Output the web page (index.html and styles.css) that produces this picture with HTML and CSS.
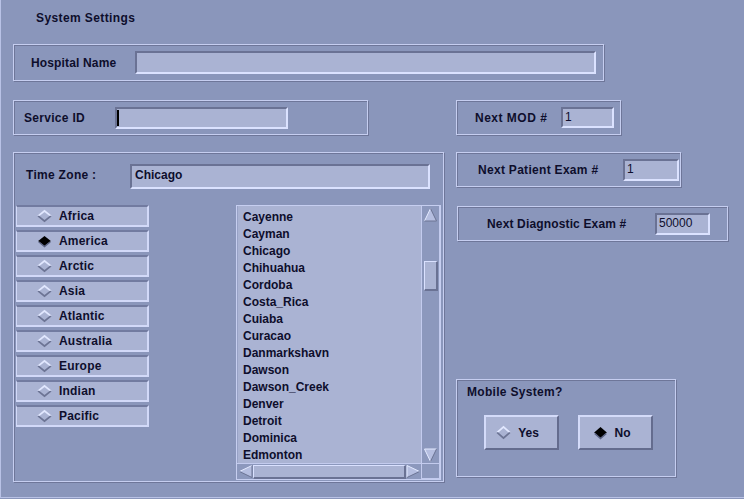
FILE: index.html
```html
<!DOCTYPE html>
<html>
<head>
<meta charset="utf-8">
<title>System Settings</title>
<link rel="stylesheet" href="styles.css">
</head>
<body>
<div class="window">
  <div class="title">System Settings</div>

  <div class="frame hospital">
    <span class="label lbl-hosp">Hospital Name</span>
    <div class="field f-hosp"></div>
  </div>

  <div class="main">
    <div class="col-left">
      <div class="frame service">
        <span class="label lbl-svc">Service ID</span>
        <div class="field f-svc"><span class="cursor"></span></div>
      </div>

      <div class="frame tz">
        <div class="tz-head">
          <span class="label lbl-tz">Time Zone :</span>
          <div class="field f-tz">Chicago</div>
        </div>
        <div class="tz-body">
          <div class="regions">
            <div class="radio"><svg class="dia" viewBox="0 0 13 13" preserveAspectRatio="none"><path class="hi" d="M1,6.5 L6.5,1 L12,6.5"/><path class="lo" d="M1,6.5 L6.5,12 L12,6.5"/></svg><span>Africa</span></div>
            <div class="radio"><svg class="dia" viewBox="0 0 13 13" preserveAspectRatio="none"><polygon class="on" points="6.5,1 12,6.5 6.5,12 1,6.5"/><path class="onlo" d="M1.5,7.5 L6.5,12.5 L11.5,7.5"/></svg><span>America</span></div>
            <div class="radio"><svg class="dia" viewBox="0 0 13 13" preserveAspectRatio="none"><path class="hi" d="M1,6.5 L6.5,1 L12,6.5"/><path class="lo" d="M1,6.5 L6.5,12 L12,6.5"/></svg><span>Arctic</span></div>
            <div class="radio"><svg class="dia" viewBox="0 0 13 13" preserveAspectRatio="none"><path class="hi" d="M1,6.5 L6.5,1 L12,6.5"/><path class="lo" d="M1,6.5 L6.5,12 L12,6.5"/></svg><span>Asia</span></div>
            <div class="radio"><svg class="dia" viewBox="0 0 13 13" preserveAspectRatio="none"><path class="hi" d="M1,6.5 L6.5,1 L12,6.5"/><path class="lo" d="M1,6.5 L6.5,12 L12,6.5"/></svg><span>Atlantic</span></div>
            <div class="radio"><svg class="dia" viewBox="0 0 13 13" preserveAspectRatio="none"><path class="hi" d="M1,6.5 L6.5,1 L12,6.5"/><path class="lo" d="M1,6.5 L6.5,12 L12,6.5"/></svg><span>Australia</span></div>
            <div class="radio"><svg class="dia" viewBox="0 0 13 13" preserveAspectRatio="none"><path class="hi" d="M1,6.5 L6.5,1 L12,6.5"/><path class="lo" d="M1,6.5 L6.5,12 L12,6.5"/></svg><span>Europe</span></div>
            <div class="radio"><svg class="dia" viewBox="0 0 13 13" preserveAspectRatio="none"><path class="hi" d="M1,6.5 L6.5,1 L12,6.5"/><path class="lo" d="M1,6.5 L6.5,12 L12,6.5"/></svg><span>Indian</span></div>
            <div class="radio"><svg class="dia" viewBox="0 0 13 13" preserveAspectRatio="none"><path class="hi" d="M1,6.5 L6.5,1 L12,6.5"/><path class="lo" d="M1,6.5 L6.5,12 L12,6.5"/></svg><span>Pacific</span></div>
          </div>

          <div class="list">
            <div class="items">
              <div>Cayenne</div>
              <div>Cayman</div>
              <div>Chicago</div>
              <div>Chihuahua</div>
              <div>Cordoba</div>
              <div>Costa_Rica</div>
              <div>Cuiaba</div>
              <div>Curacao</div>
              <div>Danmarkshavn</div>
              <div>Dawson</div>
              <div>Dawson_Creek</div>
              <div>Denver</div>
              <div>Detroit</div>
              <div>Dominica</div>
              <div>Edmonton</div>
            </div>
            <div class="vscroll">
              <svg class="arrow-v" viewBox="0 0 13 14"><polygon class="af" points="6.5,0.5 12.5,13 0.5,13"/><path class="al" d="M0.5,13 L6.5,0.5"/><path class="ad" d="M6.5,0.5 L12.5,13 L0.5,13"/></svg>
              <div class="vthumb"></div>
              <svg class="arrow-v down" viewBox="0 0 13 14"><polygon class="af" points="0.5,1 12.5,1 6.5,13.5"/><path class="al" d="M6.5,13.5 L0.5,1 L12.5,1"/><path class="ad" d="M12.5,1 L6.5,13.5"/></svg>
            </div>
            <div class="hscroll">
              <svg class="arrow-h" viewBox="0 0 14 13"><polygon class="af" points="0.5,6.5 13,0.5 13,12.5"/><path class="al" d="M13,0.5 L0.5,6.5"/><path class="ad" d="M0.5,6.5 L13,12.5 L13,0.5"/></svg>
              <div class="hthumb"></div>
              <svg class="arrow-h" viewBox="0 0 14 13"><polygon class="af" points="1,0.5 13.5,6.5 1,12.5"/><path class="al" d="M1,12.5 L1,0.5 L13.5,6.5"/><path class="ad" d="M13.5,6.5 L1,12.5"/></svg>
            </div>
            <div class="corner"></div>
          </div>
        </div>
      </div>
    </div>

    <div class="col-right">
      <div class="frame mod">
        <span class="label lbl-mod">Next MOD #</span>
        <div class="field num f-mod">1</div>
      </div>
      <div class="frame patient">
        <span class="label lbl-pat">Next Patient Exam #</span>
        <div class="field num f-pat">1</div>
      </div>
      <div class="frame diag">
        <span class="label lbl-diag">Next Diagnostic Exam #</span>
        <div class="field num f-diag">50000</div>
      </div>
      <div class="frame mobile">
        <div class="label lbl-mob">Mobile System?</div>
        <div class="buttons">
          <div class="btn"><svg class="dia big" viewBox="0 0 13 13" preserveAspectRatio="none"><path class="hi" d="M1,6.5 L6.5,1 L12,6.5"/><path class="lo" d="M1,6.5 L6.5,12 L12,6.5"/></svg><span>Yes</span></div>
          <div class="btn"><svg class="dia big" viewBox="0 0 13 13" preserveAspectRatio="none"><polygon class="on" points="6.5,1 12,6.5 6.5,12 1,6.5"/><path class="onlo" d="M1.5,7.5 L6.5,12.5 L11.5,7.5"/></svg><span>No</span></div>
        </div>
      </div>
    </div>
  </div>
</div>
</body>
</html>
```

FILE: styles.css
```css
* { box-sizing: border-box; }

html, body {
  margin: 0;
  padding: 0;
  background: #8a96bb;
}

body {
  font-family: "Liberation Sans", Arial, sans-serif;
  font-size: 12px;
  font-weight: bold;
  color: #0e0e2c;
}

.window {
  width: 744px;
  height: 498px;
  border-left: 1px solid #b9c2e6;
  border-bottom: 1px solid #b9c2e6;
  background: #8a96bb;
  overflow: hidden;
}

.title {
  margin: 11px 0 0 35px;
  line-height: 14px;
  height: 14px;
  letter-spacing: 0.4px;
}

.frame {
  border: 1px solid #c6cef0;
  box-shadow: inset 1px 1px 0 #6e7699, 1px 1px 0 #6e7699;
}

.label {
  flex: none;
  line-height: 14px;
  white-space: nowrap;
  letter-spacing: 0.3px;
}

.field {
  flex: none;
  background: #aab3d3;
  border-style: solid;
  border-width: 2px;
  border-color: #6a7294 #dbe2ff #dbe2ff #6a7294;
}

.field.num {
  font-weight: normal;
  line-height: 17px;
  padding-left: 2px;
}

/* Hospital */
.hospital {
  display: flex;
  align-items: center;
  margin: 19px 0 0 12px;
  width: 591px;
  height: 37px;
  padding-left: 17px;
}
.lbl-hosp { width: 104px; letter-spacing: 0.15px; }
.f-hosp { width: 461px; height: 23px; }

/* main area */
.main {
  display: flex;
  margin-top: 19px;
}

.col-left {
  margin-left: 12px;
  width: 431px;
  display: flex;
  flex-direction: column;
}

.service {
  display: flex;
  align-items: center;
  width: 355px;
  height: 35px;
  padding-left: 10px;
}
.lbl-svc { width: 91px; }
.f-svc {
  width: 173px;
  height: 22px;
  display: flex;
  align-items: center;
  padding-left: 0;
}
.cursor {
  display: block;
  width: 2px;
  height: 16px;
  background: #000;
}

.tz {
  margin-top: 17px;
  width: 431px;
  height: 330px;
  padding: 11px 2px 0 2px;
  display: flex;
  flex-direction: column;
}

.tz-head {
  display: flex;
  align-items: center;
  padding-left: 10px;
}
.lbl-tz { width: 104px; margin-top: -3px; }
.f-tz {
  width: 300px;
  height: 25px;
  padding: 1px 0 0 3px;
  line-height: 16px;
}

.tz-body {
  margin-top: 16px;
  display: flex;
  justify-content: space-between;
  align-items: flex-start;
}

.regions {
  width: 133px;
  display: flex;
  flex-direction: column;
  gap: 3px;
}

.radio {
  height: 22px;
  background: #aab3d3;
  border-style: solid;
  border-width: 2px 2px 2px 1px;
  border-color: #727ba0 #d2d9f8 #d2d9f8 #d2d9f8;
  display: flex;
  align-items: center;
  padding-left: 20px;
  gap: 7px;
  line-height: 14px;
  letter-spacing: 0.2px;
}

.dia {
  width: 15px;
  height: 12px;
  flex: none;
  overflow: visible;
}
.dia.big { width: 15px; height: 13px; }
.dia .hi { fill: none; stroke: #e2e8ff; stroke-width: 1.7; }
.dia .lo { fill: none; stroke: #6c7494; stroke-width: 1.7; }
.dia .on { fill: #000; }
.dia .onlo { fill: none; stroke: #5a6282; stroke-width: 1.3; }

/* list */
.list {
  width: 205px;
  height: 275px;
  border: 1px solid #c6cef0;
  display: grid;
  grid-template-columns: 1fr 19px;
  grid-template-rows: 1fr 16px;
}

.items {
  background: #aab3d3;
  padding: 3px 0 0 5px;
  line-height: 17px;
  overflow: hidden;
  border-left: 1px solid #98a2c6;
}

.vscroll {
  background: #8c98bd;
  border-left: 1px solid #c3cbee;
  border-right: 1px solid #c3cbee;
  display: flex;
  flex-direction: column;
  align-items: center;
  padding: 2px 0 1px;
}

.arrow-v { width: 13px; height: 14px; flex: none; }
.arrow-v.down { margin-top: auto; }
.arrow-h { width: 14px; height: 13px; flex: none; }
.af { fill: #b5bee0; }
.al { fill: none; stroke: #e4eaff; stroke-width: 1; }
.ad { fill: none; stroke: #6c7494; stroke-width: 1; }

.vthumb {
  margin-top: 39px;
  width: 14px;
  height: 30px;
  background: #aab3d3;
  border-style: solid;
  border-width: 1px 2px 2px 1px;
  border-color: #dae1ff #6a7294 #6a7294 #dae1ff;
}

.hscroll {
  background: #8c98bd;
  border-top: 1px solid #c3cbee;
  display: flex;
  align-items: center;
  padding: 0 1px 0 2px;
}

.hthumb {
  flex: 1;
  height: 14px;
  background: #aab3d3;
  border-style: solid;
  border-width: 1px 2px 2px 1px;
  border-color: #dae1ff #6a7294 #6a7294 #dae1ff;
}

.corner {
  background: #8c98bd;
  border: 1px solid #c3cbee;
}

/* right column */
.col-right {
  margin-left: 12px;
  display: flex;
  flex-direction: column;
  align-items: flex-start;
}

.mod, .patient, .diag {
  display: flex;
  align-items: center;
  height: 35px;
}

.mod { width: 165px; padding-left: 18px; }
.lbl-mod { width: 86px; letter-spacing: 0.5px; }
.f-mod { width: 53px; height: 21px; }

.patient { margin-top: 17px; width: 225px; padding-left: 21px; }
.lbl-pat { width: 145px; }
.f-pat { width: 56px; height: 22px; }

.diag { margin-top: 19px; margin-left: 1px; width: 271px; padding-left: 29px; }
.lbl-diag { width: 168px; letter-spacing: 0.15px; }
.f-diag { width: 55px; height: 22px; }

.mobile {
  margin-top: 138px;
  width: 220px;
  height: 98px;
  padding: 5px 0 0 10px;
}
.lbl-mob { display: block; }

.buttons {
  display: flex;
  gap: 19px;
  margin: 16px 0 0 17px;
}

.btn {
  width: 75px;
  height: 35px;
  background: #aab3d3;
  border: 2px solid;
  border-color: #d4dbf9 #646c8e #646c8e #d4dbf9;
  display: flex;
  align-items: center;
  justify-content: center;
  gap: 7px;
  padding-right: 8px;
  line-height: 14px;
}
```
